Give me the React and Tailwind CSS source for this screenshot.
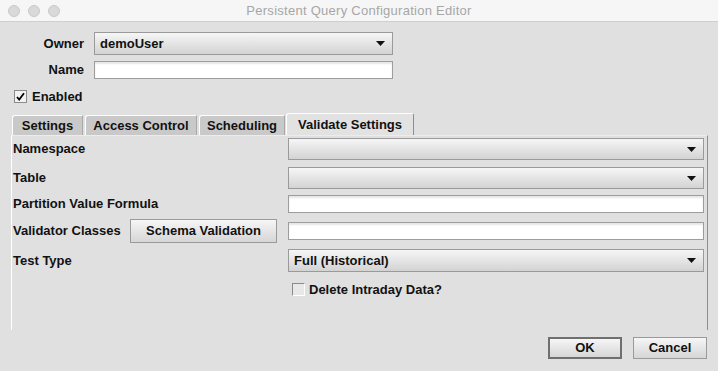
import React from "react";

const Arrow = () => (
  <svg width="9" height="5" viewBox="0 0 9 5" className="block">
    <path d="M0 0 H9 L4.5 5 Z" fill="#111" />
  </svg>
);

function Combo({ value, className = "" }) {
  return (
    <div
      className={
        "flex items-center justify-between border border-[#9a9a9a] bg-linear-to-b from-[#f6f6f6] to-[#d3d3d3] pl-[5px] pr-[7px] " +
        className
      }
    >
      <span className="leading-none">{value}</span>
      <Arrow />
    </div>
  );
}

function Field({ className = "" }) {
  return (
    <div
      className={
        "border border-[#9d9d9d] bg-white shadow-[inset_0_2px_2px_rgba(0,0,0,0.10)] " +
        className
      }
    />
  );
}

function Tab({ label, selected, className = "" }) {
  if (selected) {
    return (
      <div
        className={
          "flex h-[22px] items-center justify-center border-l border-t border-white border-r border-r-[#8e8e8e] bg-[#e2e2e2] rounded-tl-[3px] rounded-tr-[2px] " +
          className
        }
      >
        {label}
      </div>
    );
  }
  return (
    <div
      className={
        "flex h-[20px] items-center justify-center border-l border-t border-white border-r border-r-[#a8a8a8] bg-[#c9c9c9] rounded-tl-[3px] " +
        className
      }
    >
      {label}
    </div>
  );
}

export default function App() {
  return (
    <div
      className="w-[718px] h-[371px] overflow-hidden bg-[#e0e0e0] text-[13px] font-bold text-[#111]"
      style={{ fontFamily: '"Liberation Sans", Arial, sans-serif' }}
    >
      {/* Title bar */}
      <div className="relative flex h-[22px] items-center justify-center border-b border-[#cfcfcf] bg-[#f6f6f6]">
        <div className="absolute left-[8px] top-[5px] flex gap-[8px]">
          <span className="h-[12px] w-[12px] rounded-full border border-[#c9c9c9] bg-[#d9d9d9]" />
          <span className="h-[12px] w-[12px] rounded-full border border-[#c9c9c9] bg-[#d9d9d9]" />
          <span className="h-[12px] w-[12px] rounded-full border border-[#c9c9c9] bg-[#d9d9d9]" />
        </div>
        <span className="text-[13px] font-normal tracking-[0.27px] text-[#a6a6a6]">
          Persistent Query Configuration Editor
        </span>
      </div>

      {/* Owner */}
      <div className="mt-[10px] flex h-[23px] items-center">
        <div className="w-[84px] text-right">Owner</div>
        <Combo value="demoUser" className="ml-[10px] h-[23px] w-[299px]" />
      </div>
      {/* Name */}
      <div className="mt-[6px] flex h-[18px] items-center">
        <div className="w-[84px] text-right">Name</div>
        <Field className="ml-[10px] h-[18px] w-[299px]" />
      </div>
      {/* Enabled */}
      <div className="mt-[11px] flex h-[13px] items-center pl-[14px]">
        <div className="flex h-[13px] w-[13px] items-center justify-center border border-[#8a8a8a] bg-[#f2f2f2]">
          <svg width="9" height="9" viewBox="0 0 9 9">
            <path d="M1 5 L3.2 7.6 L8 1.2" stroke="#000" strokeWidth="1.8" fill="none" />
          </svg>
        </div>
        <span className="ml-[5px]">Enabled</span>
      </div>

      {/* Tabs */}
      <div className="mt-[11px] flex h-[21px] items-end pl-[12px]">
        <Tab label="Settings" className="w-[71px]" />
        <Tab label="Access Control" className="ml-[2px] w-[112px]" />
        <Tab label="Scheduling" className="ml-[2px] w-[86px]" />
        <Tab label="Validate Settings" selected className="ml-[1px] w-[128px]" />
      </div>

      {/* Panel */}
      <div className="ml-[11px] h-[195px] w-[697px] border-l border-white border-r border-r-[#8e8e8e] border-t border-t-[#ececec] pt-[2px] pr-[3px]">
        <div className="flex h-[22px] items-center justify-between">
          <span className="pl-[1px]">Namespace</span>
          <Combo value="" className="h-[22px] w-[416px]" />
        </div>
        <div className="mt-[7px] flex h-[22px] items-center justify-between">
          <span className="pl-[1px]">Table</span>
          <Combo value="" className="h-[22px] w-[416px]" />
        </div>
        <div className="mt-[6px] flex h-[18px] items-center justify-between">
          <span className="pl-[1px]">Partition Value Formula</span>
          <Field className="h-[18px] w-[416px]" />
        </div>
        <div className="mt-[6px] flex h-[24px] items-center justify-between">
          <div className="flex items-center">
            <span className="w-[118px] pl-[1px]">Validator Classes</span>
            <div className="flex h-[24px] w-[147px] items-center justify-center border border-[#9a9a9a] bg-linear-to-b from-[#f6f6f6] to-[#d6d6d6]">
              Schema Validation
            </div>
          </div>
          <Field className="h-[18px] w-[416px]" />
        </div>
        <div className="mt-[6px] flex h-[23px] items-center justify-between">
          <span className="pl-[1px]">Test Type</span>
          <Combo value="Full (Historical)" className="h-[23px] w-[416px]" />
        </div>
        <div className="mt-[11px] flex h-[13px] items-center pl-[280px]">
          <div className="h-[13px] w-[13px] border border-t-[#8a8a8a] border-l-[#8a8a8a] border-r-white border-b-white bg-[#e8e8e8]" />
          <span className="ml-[4px]">Delete Intraday Data?</span>
        </div>
      </div>

      {/* Buttons */}
      <div className="mt-[7px] flex justify-end gap-[11px] pr-[11px]">
        <div className="flex h-[22px] w-[74px] items-center justify-center border-2 border-[#6f6f6f] bg-linear-to-b from-[#f6f6f6] to-[#d6d6d6]">
          OK
        </div>
        <div className="flex h-[22px] w-[74px] items-center justify-center border border-[#9a9a9a] bg-linear-to-b from-[#f6f6f6] to-[#d6d6d6]">
          Cancel
        </div>
      </div>
    </div>
  );
}
